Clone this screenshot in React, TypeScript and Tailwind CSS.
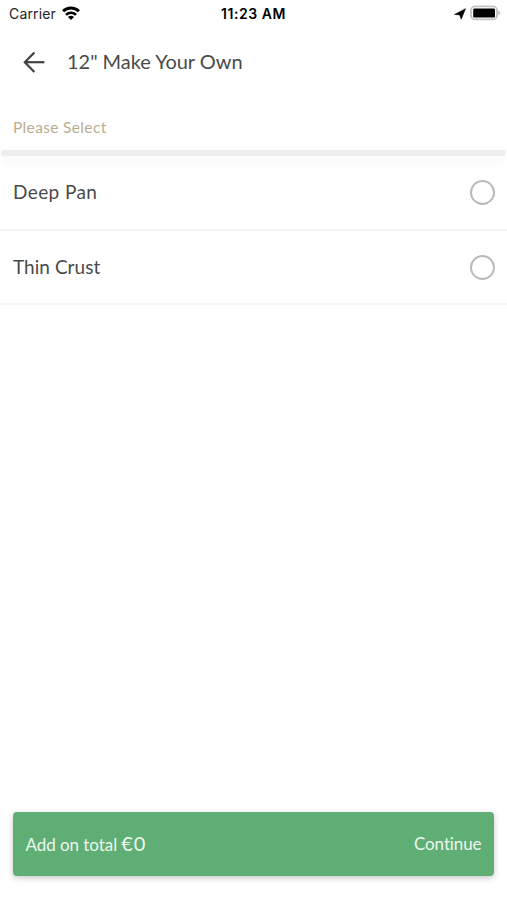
import React from 'react';

const options = [
  { id: 'deep-pan', label: 'Deep Pan', row: 'h-[75px]', spacing: 'tracking-[0.4px]' },
  { id: 'thin-crust', label: 'Thin Crust', row: 'h-[74px]', spacing: 'tracking-[0.05px]' },
];

function StatusBar() {
  return (
    <div className="relative flex h-7 items-center justify-between pl-[9px] pr-[6px] font-['Inter',sans-serif] text-black">
      <div className="flex items-center gap-[6px]">
        <span className="text-[14px] leading-7 tracking-[0.15px] text-[#222]">Carrier</span>
        <svg width="18" height="14" viewBox="0 0 18 14" fill="none" stroke="currentColor" strokeWidth="3" className="-mt-[2px]">
          <path d="M1.1 5.2C5.4 0.9 12.6 0.9 16.9 5.2" />
          <path d="M4 8.8C6.7 6 11.3 6 14 8.8" strokeWidth="2.6" />
          <path d="M9 14L6 11C7.8 9.4 10.2 9.4 12 11Z" fill="currentColor" stroke="none" />
        </svg>
      </div>
      <span className="absolute left-[221px] text-[14px] font-semibold leading-7 tracking-[0.55px]">11:23 AM</span>
      <div className="flex items-center gap-[4px]">
        <svg width="12" height="12" viewBox="0 0 12 12" fill="currentColor" className="-mt-px">
          <path d="M11.5 0.7L7.2 11.2L5.7 6.9L0.6 6.4Z" stroke="currentColor" strokeWidth="0.6" strokeLinejoin="round" />
        </svg>
        <svg width="31" height="16" viewBox="0 0 31 16" className="-mt-[2px]">
          <rect x="1" y="1.4" width="26" height="13" rx="4" fill="#fff" stroke="#c4c4c4" strokeWidth="1.8" />
          <rect x="3.2" y="3.6" width="21.8" height="9" rx="1.2" fill="#000" />
          <path d="M28.2 5.4C30.8 6.4 30.8 9.4 28.2 10.4Z" fill="#c4c4c4" />
        </svg>
      </div>
    </div>
  );
}

function Header() {
  return (
    <header className="flex h-[68px] items-center pl-[23px]">
      <button aria-label="Back" className="text-[#404040]">
        <svg width="22" height="22" viewBox="0 0 22 22" fill="none" stroke="currentColor" strokeWidth="2.2">
          <path d="M21.4 11.2H2" />
          <path d="M11.4 1.4L1.8 11.2L11.4 21" />
        </svg>
      </button>
      <h1 className="mb-[2px] ml-[22px] text-[20px] leading-[28px] tracking-[-0.03px] text-[#4a4a4a]">12" Make Your Own</h1>
    </header>
  );
}

export default function App() {
  const [selected, setSelected] = React.useState<string | null>(null);

  return (
    <div className="flex h-[900px] w-full flex-col overflow-hidden bg-white font-['Lato',sans-serif] [font-variant-ligatures:none]">
      <StatusBar />
      <Header />

      <div className="h-[54px] px-[13px] pt-[21px]">
        <p className="text-[15.5px] leading-5 tracking-[0.35px] text-[#b9ad8e]">Please Select</p>
      </div>
      <div className="mx-px h-[6px] shrink-0 rounded-[3px] bg-[#eeeeee] shadow-[0_7px_10px_rgba(0,0,0,0.035)]" />

      <ul>
        {options.map((option) => (
          <li key={option.id}>
            <button
              className={`flex w-full items-center justify-between border-b-2 border-[#f5f5f5] pl-[13px] pr-[12px] ${option.row}`}
              onClick={() => setSelected(option.id)}
            >
              <span className={`mb-px text-[19px] leading-6 text-[#4a4a4a] ${option.spacing}`}>{option.label}</span>
              <span className="flex size-[25px] items-center justify-center rounded-full border-[2.5px] border-[#bababa]">
                {selected === option.id && <span className="size-3 rounded-full bg-[#5eae76]" />}
              </span>
            </button>
          </li>
        ))}
      </ul>

      <button className="mx-[13px] mb-[24px] mt-auto flex h-[64px] shrink-0 items-center justify-between rounded-[4px] bg-[#5eae76] px-[12.5px] text-[#edf8ee] shadow-[0_2px_6px_rgba(0,0,0,0.22)]">
        <span className="mb-[3px] flex items-baseline gap-1">
          <span className="text-[17px] tracking-[-0.05px]">Add on total</span>
          <span className="text-[20px] tracking-[1px]">€0</span>
        </span>
        <span className="text-[17px] tracking-[-0.1px]">Continue</span>
      </button>
    </div>
  );
}
